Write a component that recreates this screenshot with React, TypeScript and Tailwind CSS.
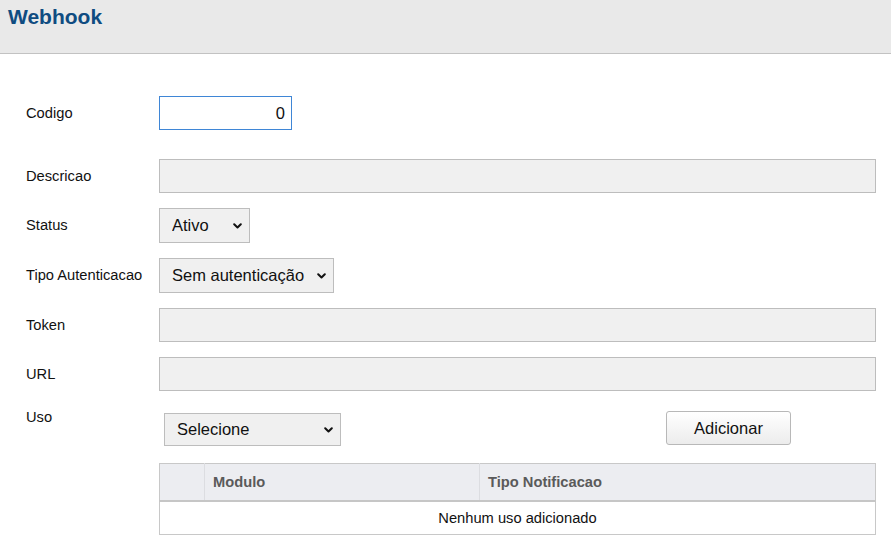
import { ReactNode } from 'react';

function Chevron() {
  return (
    <svg
      width="9"
      height="6"
      viewBox="0 0 9 6"
      className="pointer-events-none absolute top-1/2 -translate-y-1/2"
      style={{ right: 8 }}
    >
      <path d="M1.2 1.2 L4.5 4.5 L7.8 1.2" fill="none" stroke="#111" strokeWidth="2" strokeLinecap="round" strokeLinejoin="round" />
    </svg>
  );
}

function Select({ value, width, height }: { value: string; width: number; height: number }) {
  return (
    <div className="relative" style={{ width, height }}>
      <select
        defaultValue={value}
        className="h-full w-full appearance-none border border-[#bdbdbd] bg-[#f0f0f0] pl-3 pr-6 text-[16.5px] text-[#111] outline-none"
      >
        <option>{value}</option>
      </select>
      <Chevron />
    </div>
  );
}

function Row({ label, children, className = '' }: { label: string; children: ReactNode; className?: string }) {
  return (
    <div className={`flex items-center ${className}`}>
      <label className="w-[133px] shrink-0 text-[14.7px] text-[#111]">{label}</label>
      {children}
    </div>
  );
}

function GrayInput() {
  return <input className="h-[34px] w-full border border-[#bdbdbd] bg-[#f0f0f0] px-2 text-[16px] outline-none" />;
}

export default function App() {
  return (
    <div className="min-h-screen bg-white font-['Liberation_Sans',Arial,sans-serif]">
      <header className="h-[54px] border-b border-[#c2c2c2] bg-[#e9e9e9] px-2 pt-[5px]">
        <h1 className="text-[21px] font-bold leading-[24px] text-[#0f4c81]">Webhook</h1>
      </header>

      <form className="pl-[26px] pr-[15px]">
        <Row label="Codigo" className="mt-[42px]">
          <input
            defaultValue="0"
            className="h-[34px] w-[133px] border border-[#3f86d6] bg-white pl-2 pr-[6px] text-right text-[16.5px] text-[#111] outline-none"
          />
        </Row>
        <Row label="Descricao" className="mt-[29px]">
          <GrayInput />
        </Row>
        <Row label="Status" className="mt-[15px]">
          <Select value="Ativo" width={91} height={35} />
        </Row>
        <Row label="Tipo Autenticacao" className="mt-[15px]">
          <Select value="Sem autenticação" width={175} height={35} />
        </Row>
        <Row label="Token" className="mt-[15px]">
          <GrayInput />
        </Row>
        <Row label="URL" className="mt-[15px]">
          <GrayInput />
        </Row>

        <div className="mt-[15px] flex items-start">
          <label className="w-[133px] shrink-0 pt-[1px] text-[14.7px] leading-[20px] text-[#111]">Uso</label>
          <div className="ml-[5px] mt-[7px]">
            <Select value="Selecione" width={177} height={33} />
          </div>
          <button
            type="button"
            className="ml-auto mr-[85px] mt-[5px] h-[34px] w-[125px] rounded-[3px] border border-[#b8b8b8] bg-gradient-to-b from-white to-[#ececec] text-[16.5px] text-[#111]"
          >
            Adicionar
          </button>
        </div>

        <table className="ml-[133px] mt-[17px] w-[717px] border-collapse border border-[#c8c8c8] text-[14.7px]">
          <thead>
            <tr className="h-[37px] border-b-2 border-[#c6c6c6] bg-[#ecedf1] text-left font-bold text-[#5a5a5a]">
              <th className="w-[45px] border-r border-[#dcdde1]"></th>
              <th className="w-[275px] border-r border-[#dcdde1] px-2">Modulo</th>
              <th className="px-2">Tipo Notificacao</th>
            </tr>
          </thead>
          <tbody>
            <tr className="h-[34px]">
              <td colSpan={3} className="pt-[1px] text-center text-[#111]">
                Nenhum uso adicionado
              </td>
            </tr>
          </tbody>
        </table>
      </form>
    </div>
  );
}
